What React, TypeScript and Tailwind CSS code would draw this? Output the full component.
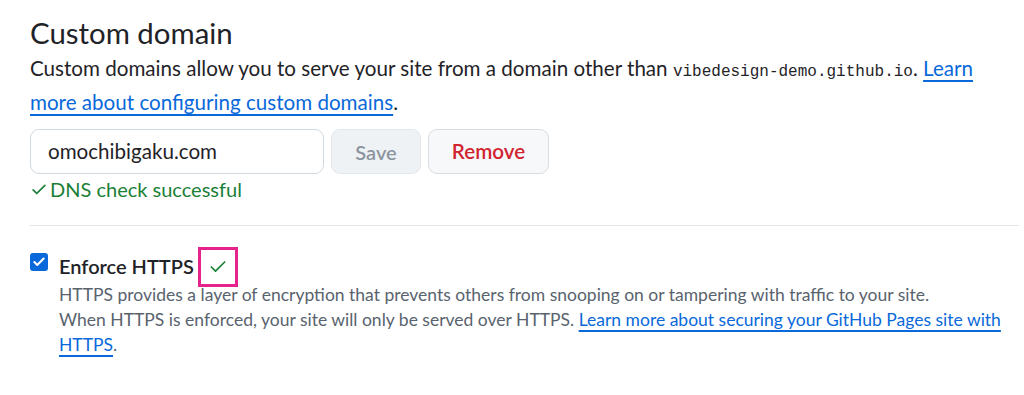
import { Check } from "lucide-react";

const SANS = "font-['Lato',sans-serif]";

function CheckIcon({ className = "" }: { className?: string }) {
  return (
    <svg viewBox="0 0 16 16" className={className} fill="currentColor" aria-hidden>
      <path d="M13.78 4.22a.75.75 0 0 1 0 1.06l-7.25 7.25a.75.75 0 0 1-1.06 0L2.22 9.28a.751.751 0 0 1 .018-1.042.751.751 0 0 1 1.042-.018L6 10.94l6.72-6.72a.75.75 0 0 1 1.06 0Z" />
    </svg>
  );
}

export default function App() {
  return (
    <div className={`h-[395px] w-[1024px] overflow-hidden bg-white pl-[30px] pr-[5px] text-[#1f2328] ${SANS}`}>
      <h2 className="pt-[15px] text-[29.4px] leading-[36px] font-normal">Custom domain</h2>
      <p className="mt-[2px] text-[20.6px] leading-[30px] whitespace-nowrap">
        Custom domains allow you to serve your site from a domain other than{" "}
        <code className="font-['Liberation_Mono',monospace] text-[16px]">vibedesign-demo.github.io</code>.{" "}
        <a className="text-[#0969da] underline decoration-[1.5px] underline-offset-[4px]" href="#">
          Learn
          <br />
          more about configuring custom domains
        </a>
        .
      </p>

      <div className="mt-[12px] flex items-center gap-[7px]">
        <div className="flex h-[45px] w-[294px] items-center rounded-[9px] border border-[#d1d9e0] px-[17px] text-[20.6px]">
          omochibigaku.com
        </div>
        <button
          type="button"
          className="h-[45px] w-[90px] rounded-[9px] border border-[#e3e8ec] bg-[#eff2f5] text-[20px] font-semibold text-[#8c959f]"
        >
          Save
        </button>
        <button
          type="button"
          className="h-[45px] w-[121px] rounded-[9px] border border-[#d8dee4] bg-[#f6f8fa] text-[20.6px] font-semibold text-[#d1242f]"
        >
          Remove
        </button>
      </div>
      <div className="flex items-center gap-[2px] text-[20px] leading-[30px] text-[#1a7f37]">
        <CheckIcon className="h-[18px] w-[18px]" />
        DNS check successful
      </div>

      <div className="mt-[21px] h-px bg-[#e1e4e8]" />

      <div className="mt-[21px] flex gap-[11px]">
        <div className="mt-[6px] flex h-[18px] w-[18px] shrink-0 items-center justify-center rounded-[3px] bg-[#0969da] text-white">
          <Check className="h-[14px] w-[14px]" strokeWidth={3.5} />
        </div>
        <div>
          <div className="-mt-[3px] flex items-center gap-[4px]">
            <span className="text-[20px] leading-[30px] font-semibold">Enforce HTTPS</span>
            <span className="mt-[3px] flex h-[40px] w-[40px] shrink-0 items-center justify-center border-[3px] border-[#e6228c] text-[#1a7f37]">
              <Check className="h-[20px] w-[20px]" strokeWidth={2} />
            </span>
          </div>
          <p className="-mt-[5px] text-[17.5px] leading-[25px] whitespace-nowrap text-[#59636e]">
            HTTPS provides a layer of encryption that prevents others from snooping on or tampering with traffic to your site.
            <br />
            When HTTPS is enforced, your site will only be served over HTTPS.{" "}
            <a className="text-[#0969da] underline decoration-[1.5px] underline-offset-[4px]" href="#">
              Learn more about securing your GitHub Pages site with
              <br />
              HTTPS
            </a>
            .
          </p>
        </div>
      </div>
    </div>
  );
}
